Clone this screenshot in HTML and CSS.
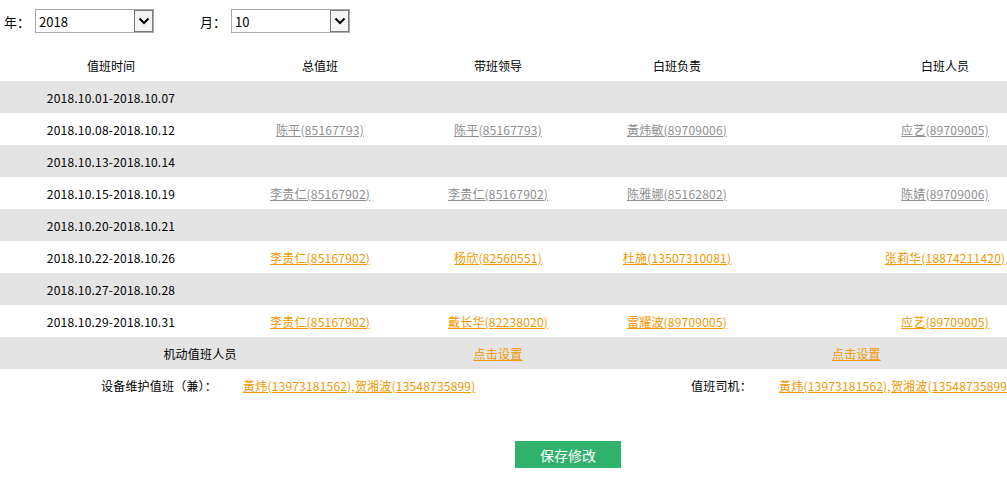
FILE: index.html
```html
<!DOCTYPE html>
<html lang="zh-CN">

<head>
    <meta charset="UTF-8">
    <title>值班安排</title>
    <link rel="stylesheet" href="styles.css">
</head>

<body>
    <div class="filter-bar">
        <label class="filter-label">年：</label>
        <div class="select-box">
            <select class="select">
                <option>2018</option>
            </select>
            <span class="select-arrow">
                <svg width="12" height="8" viewBox="0 0 12 8"><path d="M1.5 1.5 L6 6 L10.5 1.5" fill="none" stroke="#000" stroke-width="2"/></svg>
            </span>
        </div>
        <label class="filter-label month">月：</label>
        <div class="select-box">
            <select class="select">
                <option>10</option>
            </select>
            <span class="select-arrow">
                <svg width="12" height="8" viewBox="0 0 12 8"><path d="M1.5 1.5 L6 6 L10.5 1.5" fill="none" stroke="#000" stroke-width="2"/></svg>
            </span>
        </div>
    </div>

    <table class="duty-table">
        <colgroup>
            <col class="c1">
            <col class="c2">
            <col class="c3">
            <col class="c4">
            <col class="c5">
        </colgroup>
        <thead>
            <tr>
                <th>值班时间</th>
                <th>总值班</th>
                <th>带班领导</th>
                <th>白班负责</th>
                <th>白班人员</th>
            </tr>
        </thead>
        <tbody>
            <tr class="odd">
                <td>2018.10.01-2018.10.07</td>
                <td></td><td></td><td></td><td></td>
            </tr>
            <tr>
                <td>2018.10.08-2018.10.12</td>
                <td><a class="past">陈平(85167793)</a></td>
                <td><a class="past">陈平(85167793)</a></td>
                <td><a class="past">黃炜敏(89709006)</a></td>
                <td><a class="past">应艺(89709005)</a></td>
            </tr>
            <tr class="odd">
                <td>2018.10.13-2018.10.14</td>
                <td></td><td></td><td></td><td></td>
            </tr>
            <tr>
                <td>2018.10.15-2018.10.19</td>
                <td><a class="past">李贵仁(85167902)</a></td>
                <td><a class="past">李贵仁(85167902)</a></td>
                <td><a class="past">陈雅娜(85162802)</a></td>
                <td><a class="past">陈婧(89709006)</a></td>
            </tr>
            <tr class="odd">
                <td>2018.10.20-2018.10.21</td>
                <td></td><td></td><td></td><td></td>
            </tr>
            <tr>
                <td>2018.10.22-2018.10.26</td>
                <td><a>李贵仁(85167902)</a></td>
                <td><a>杨欣(82560551)</a></td>
                <td><a>杜施(13507310081)</a></td>
                <td><a>张莉华(18874211420)</a></td>
            </tr>
            <tr class="odd">
                <td>2018.10.27-2018.10.28</td>
                <td></td><td></td><td></td><td></td>
            </tr>
            <tr>
                <td>2018.10.29-2018.10.31</td>
                <td><a>李贵仁(85167902)</a></td>
                <td><a>戴长华(82238020)</a></td>
                <td><a>雷耀波(89709005)</a></td>
                <td><a>应艺(89709005)</a></td>
            </tr>
            <tr class="odd">
                <td colspan="2" class="mobile-label">机动值班人员</td>
                <td><a>点击设置</a></td>
                <td colspan="2" class="mobile-set"><a>点击设置</a></td>
            </tr>
            <tr class="extra">
                <td class="extra-label">设备维护值班（兼）：</td>
                <td colspan="2" class="extra-value first"><a>黃炜(13973181562),贺湘波(13548735899)</a></td>
                <td class="extra-label driver">值班司机：</td>
                <td class="extra-value"><a>黃炜(13973181562),贺湘波(13548735899)</a></td>
            </tr>
        </tbody>
    </table>

    <div class="actions">
        <button class="save-btn">保存修改</button>
    </div>
</body>

</html>
```

FILE: styles.css
```css
html,
body {
    overflow: hidden;
}

body {
    margin: 0;
    padding: 0;
    width: 1007px;
    height: 484px;
    font-family: "Noto Sans CJK SC", "Noto Sans", sans-serif;
    font-size: 12px;
    color: #000;
    background-color: #fff;
}

.filter-bar {
    display: flex;
    align-items: center;
    height: 24px;
    padding: 9px 0 0 4px;
}

.filter-label {
    font-size: 13px;
    width: 31px;
}

.filter-label.month {
    margin-left: 46px;
}

.select-box {
    position: relative;
    width: 119px;
    height: 24px;
}

.select {
    appearance: none;
    -webkit-appearance: none;
    width: 100%;
    height: 100%;
    margin: 0;
    padding: 0 0 0 3px;
    border: 1px solid #a9a9a9;
    border-radius: 0;
    background-color: #fff;
    font-family: "Noto Sans CJK SC", "Noto Sans", sans-serif;
    font-size: 13px;
    color: #000;
}

.select-arrow {
    position: absolute;
    top: 1px;
    right: 1px;
    width: 17px;
    height: 20px;
    border: 1px solid #7a7a7a;
    background-color: #f4f4f4;
    display: flex;
    align-items: center;
    justify-content: center;
}

.duty-table {
    margin-top: 17px;
    width: 1114px;
    border-collapse: collapse;
    table-layout: fixed;
}

.c1 { width: 222px; }
.c2 { width: 196px; }
.c3 { width: 160px; }
.c4 { width: 198px; }
.c5 { width: 338px; }

.duty-table th {
    height: 31px;
    font-weight: normal;
    text-align: center;
    padding: 0;
}

.duty-table td {
    height: 32px;
    padding: 0;
    text-align: center;
    white-space: nowrap;
    letter-spacing: 0.2px;
}

.duty-table tr.odd td {
    background-color: #e4e4e4;
}

.duty-table a {
    color: #f39800;
    text-decoration: underline;
    cursor: pointer;
}

.duty-table a.past {
    color: #8f8f8f;
}

.duty-table td.mobile-label {
    padding-right: 18px;
}

.duty-table td.mobile-set {
    text-align: left;
    padding-left: 254px;
}

.duty-table td.extra-label {
    text-align: right;
    padding-right: 5px;
}

.duty-table td.extra-label.driver {
    padding-right: 24px;
}

.duty-table td.extra-value {
    text-align: left;
    padding-left: 3px;
}

.duty-table td.extra-value.first {
    padding-left: 21px;
}

.actions {
    display: flex;
    justify-content: center;
    padding-top: 40px;
    margin-left: 129px;
}

.save-btn {
    width: 106px;
    height: 27px;
    border: none;
    border-radius: 0;
    background-color: #30b16c;
    color: #fff;
    font-family: "Noto Sans CJK SC", "Noto Sans", sans-serif;
    font-size: 14px;
    cursor: pointer;
}
```
